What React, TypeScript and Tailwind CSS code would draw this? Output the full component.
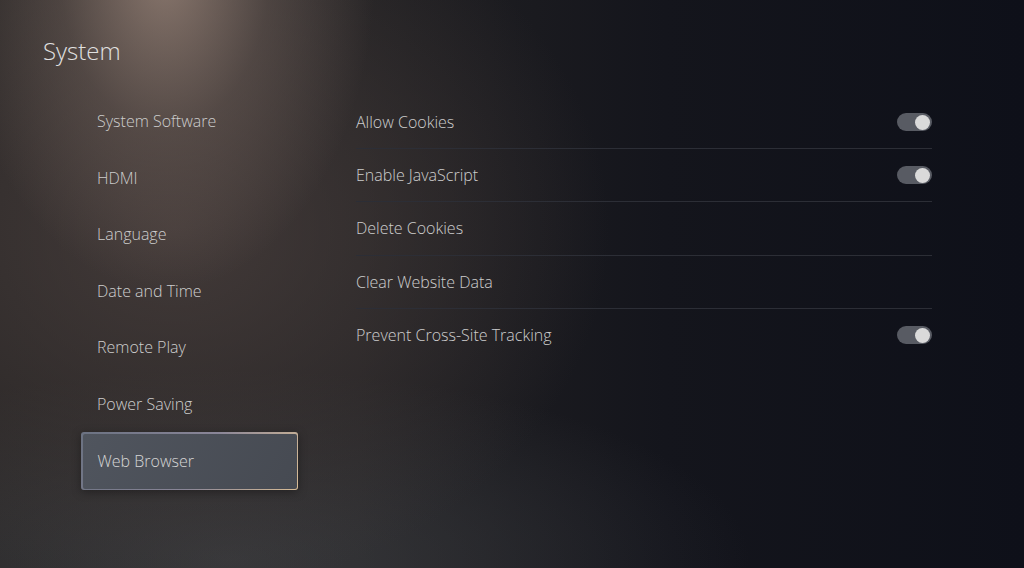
const leftItems = [
  "System Software",
  "HDMI",
  "Language",
  "Date and Time",
  "Remote Play",
  "Power Saving",
  "Web Browser",
];

const rightItems = [
  { label: "Allow Cookies", toggle: true },
  { label: "Enable JavaScript", toggle: true },
  { label: "Delete Cookies", toggle: false },
  { label: "Clear Website Data", toggle: false },
  { label: "Prevent Cross-Site Tracking", toggle: true },
];

function Toggle() {
  return (
    <div className="w-[35px] h-[18px] rounded-full bg-[#585b63] flex items-center justify-end pr-[2px]">
      <div className="w-[15px] h-[15px] rounded-full bg-[#dadada]" />
    </div>
  );
}

export default function App() {
  return (
    <div
      className="w-[1024px] h-[568px] overflow-hidden text-[#cdcdcd] bg-[radial-gradient(ellipse_210px_320px_at_165px_-30px,rgba(160,138,126,0.8),rgba(125,108,100,0.4)_50%,transparent_100%),radial-gradient(ellipse_620px_520px_at_175px_230px,rgba(72,62,60,0.85),transparent_70%),radial-gradient(ellipse_520px_190px_at_230px_560px,rgba(72,74,78,0.55),transparent),linear-gradient(90deg,#262424_0%,#222123_35%,#14151c_65%,#0e1019_100%)]"
      style={{ fontFamily: '"Open Sans", "Noto Sans", sans-serif' }}
    >
      <div className="pl-[43px] pt-[34px] text-[24px] leading-[34px] font-light text-[#e0e0e0]">
        System
      </div>

      <div className="flex mt-[25px]">
        {/* left menu */}
        <div className="w-[217px] ml-[81px] flex flex-col">
          {leftItems.map((item) => {
            const selected = item === "Web Browser";
            if (selected) {
              return (
                <div
                  key={item}
                  className="h-[58px] rounded-[3px] p-[1.5px] bg-[linear-gradient(120deg,#6b7282,#8a8698_55%,#d9bd96)] shadow-[0_2px_10px_rgba(0,0,0,0.35)]"
                >
                  <div className="h-full rounded-[2px] bg-[linear-gradient(120deg,#50555e,#464a52)] flex items-center pl-[15px] text-[16px] font-light text-[#d6d6d6]">
                    {item}
                  </div>
                </div>
              );
            }
            return (
              <div
                key={item}
                className="h-[56.5px] flex items-center pl-[16px] text-[16px] font-light"
              >
                {item}
              </div>
            );
          })}
        </div>

        {/* right list */}
        <div className="ml-[58px] w-[576px] flex flex-col mt-[3px]">
          {rightItems.map((row, i) => (
            <div
              key={row.label}
              className={`h-[53.2px] flex items-center justify-between text-[16px] font-light ${
                i < rightItems.length - 1 ? "border-b border-[#2c2e36]" : ""
              }`}
            >
              <span>{row.label}</span>
              {row.toggle && <Toggle />}
            </div>
          ))}
        </div>
      </div>
    </div>
  );
}
